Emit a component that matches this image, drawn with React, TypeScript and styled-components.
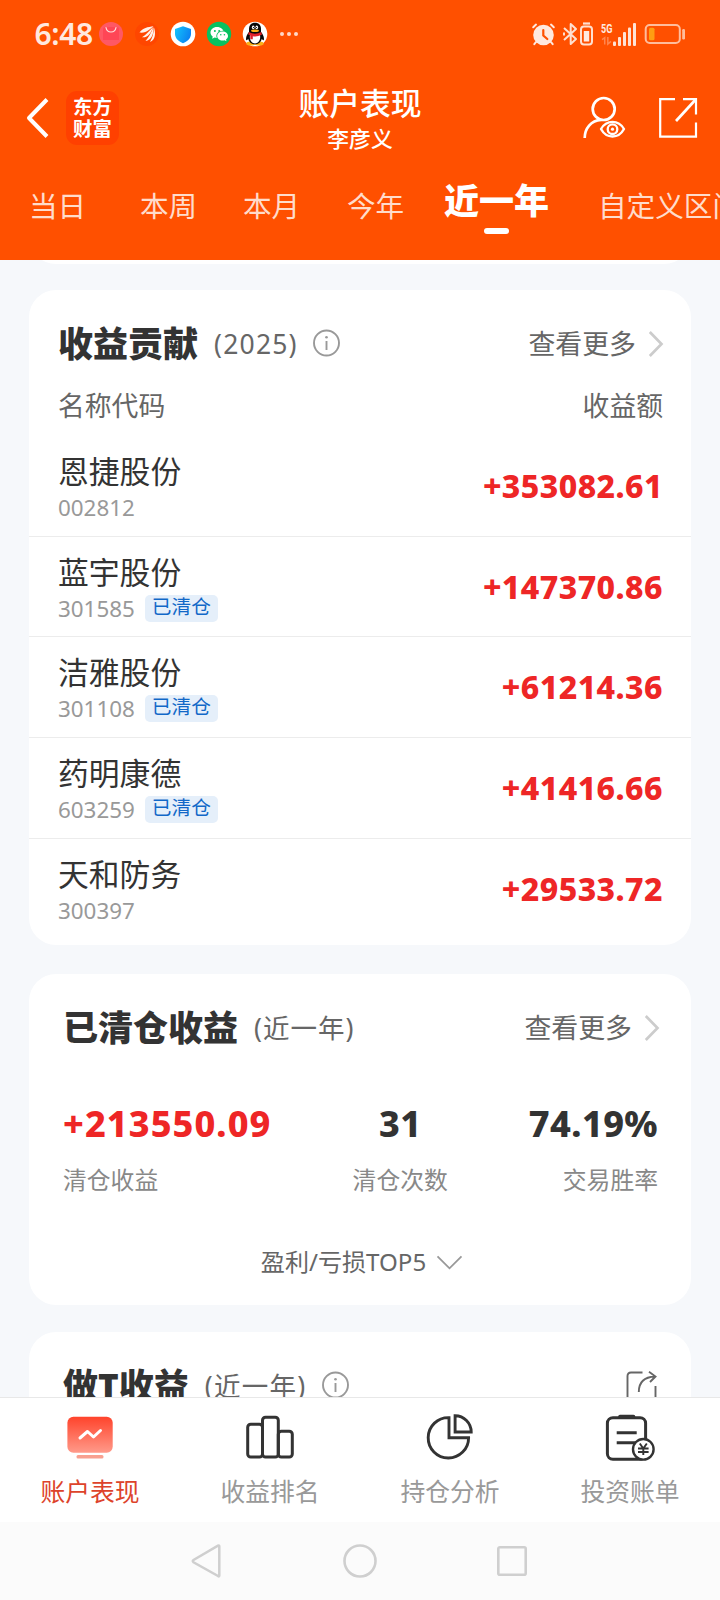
import React from "react";
import styled, { createGlobalStyle } from "styled-components";

const GlobalStyle = createGlobalStyle`
  * { box-sizing: border-box; }
  body {
    margin: 0;
    background: #f6f8fb;
    font-family: "Noto Sans", "Noto Sans CJK SC", sans-serif;
    color: #333;
  }
  svg { display: block; flex: none; overflow: visible; }
`;

const Screen = styled.div`
  width: 720px;
  height: 1600px;
  display: flex;
  flex-direction: column;
  overflow: hidden;
  background: #f6f8fb;
`;

const Header = styled.header`
  flex: none;
  height: 260px;
  background: #ff5000;
  color: #fff;
`;

const StatusBar = styled.div`
  height: 68px;
  padding: 0 34px 0 34px;
  display: flex;
  align-items: center;
  justify-content: space-between;
  color: #ffe9df;
`;

const StatusGroup = styled.div<{ $gap: number }>`
  display: flex;
  align-items: center;
  gap: ${(p) => p.$gap}px;
`;

const Clock = styled.span`
  width: 65px;
  margin-right: -12px;
  font-family: "Noto Sans", sans-serif;
  font-size: 30px;
  font-weight: 600;
  line-height: 40px;
  letter-spacing: -0.4px;
  text-indent: 0.5px;
`;

const TitleBar = styled.div`
  height: 92px;
  padding: 0 22px;
  display: grid;
  grid-template-columns: 1fr auto 1fr;
  align-items: center;
`;

const BarSide = styled.div<{ $end?: boolean }>`
  display: flex;
  align-items: center;
  justify-content: ${(p) => (p.$end ? "flex-end" : "flex-start")};
  gap: ${(p) => (p.$end ? 34 : 17)}px;
  padding: 7px ${(p) => (p.$end ? 1 : 0)}px 0 ${(p) => (p.$end ? 0 : 4)}px;
`;

const Logo = styled.div`
  width: 53px;
  height: 54px;
  border-radius: 11px;
  background: #ff4000;
  font-size: 19.4px;
  font-weight: 700;
  line-height: 22.5px;
  text-align: center;
  padding-top: 5px;
`;

const Heading = styled.div`
  text-align: center;
  padding-top: 8px;
`;

const HeadTitle = styled.h1`
  margin: 0;
  font-size: 30.8px;
  font-weight: 500;
  line-height: 40px;
`;

const HeadSub = styled.div`
  margin-top: 1px;
  font-size: 21.8px;
  font-weight: 500;
  line-height: 30px;
`;

const Tabs = styled.nav`
  height: 100px;
  padding-left: 29px;
  display: flex;
  white-space: nowrap;
  overflow: hidden;
`;

const Tab = styled.div<{ $width: number; $active?: boolean }>`
  flex: none;
  width: ${(p) => p.$width}px;
  padding-top: ${(p) => (p.$active ? 21 : 26)}px;
  font-size: ${(p) => (p.$active ? 35 : 28.6)}px;
  font-weight: ${(p) => (p.$active ? 900 : 400)};
  line-height: 40px;
  color: ${(p) => (p.$active ? "#fff" : "#ffdccb")};
`;

const Indicator = styled.div`
  width: 25px;
  height: 6px;
  margin: 7px 0 0 40px;
  border-radius: 3px;
  background: #fff;
`;

const Content = styled.main`
  flex: none;
  height: 1137px;
  padding: 0 29px;
  overflow: hidden;
`;

const Card = styled.section<{ $height: number; $gap: number }>`
  height: ${(p) => p.$height}px;
  margin-bottom: ${(p) => p.$gap}px;
  border-radius: 27px;
  background: #fff;
`;

const CardTail = styled.div`
  height: 30px;
  margin: -26px 0 26px;
  border-radius: 0 0 27px 27px;
  background: #fff;
`;

const CardHead = styled.div<{ $inset?: boolean }>`
  display: flex;
  align-items: center;
  height: 106px;
  padding: ${(p) => (p.$inset ? "0 32px 0 34px" : "0 28px 0 29px")};
`;

const CardTitle = styled.h2`
  margin: 0;
  padding-top: 2px;
  font-size: 35px;
  font-weight: 900;
  line-height: 46px;
  color: #333;
`;

const CardNote = styled.span<{ $tracking: number }>`
  margin: 0 15px 0 16px;
  padding-top: 1px;
  font-size: 26.5px;
  line-height: 40px;
  letter-spacing: ${(p) => p.$tracking}px;
  color: #666;
`;

const More = styled.span`
  margin-left: auto;
  padding-top: 2px;
  display: flex;
  align-items: center;
  gap: 13px;
  font-size: 26.9px;
  line-height: 40px;
  color: #666;
`;

const ColumnLabels = styled.div`
  height: 40px;
  margin: -10px 0 10px;
  padding: 0 28px 0 29px;
  display: flex;
  justify-content: space-between;
  font-size: 26.8px;
  line-height: 40px;
  color: #666;
`;

const Row = styled.div`
  height: 100.7px;
  padding: 0 28px 0 29px;
  display: flex;
  justify-content: space-between;
  border-bottom: 1px solid #ececec;
  &:last-child { border-bottom: 0; }
`;

const StockName = styled.div`
  padding-top: 15px;
  font-size: 30.8px;
  line-height: 40px;
  color: #333;
`;

const StockMeta = styled.div`
  display: flex;
  align-items: center;
  height: 33px;
  font-size: 22.4px;
  line-height: 33px;
  color: #999;
`;

const Badge = styled.span`
  height: 27px;
  margin-left: 10px;
  padding: 0 7px;
  border-radius: 5px;
  background: #e5effa;
  color: #1268c8;
  font-size: 19.7px;
  line-height: 24px;
`;

const Amount = styled.div`
  padding-top: 30px;
  font-size: 32px;
  font-weight: 800;
  line-height: 40px;
  letter-spacing: 0.45px;
  color: #ee2626;
`;

const Stats = styled.div`
  display: flex;
  justify-content: space-between;
  padding: 24px 33px 0 34px;
`;

const Stat = styled.div<{ $align: string }>`
  text-align: ${(p) => p.$align};
`;

const StatValue = styled.div<{ $gain?: boolean }>`
  font-size: 36px;
  font-weight: 800;
  line-height: 40px;
  letter-spacing: ${(p) => (p.$gain ? 1.1 : 0.4)}px;
  white-space: nowrap;
  color: ${(p) => (p.$gain ? "#ee2626" : "#333")};
`;

const StatLabel = styled.div`
  margin-top: 20px;
  font-size: 23.8px;
  line-height: 32px;
  color: #888;
`;

const Expand = styled.div`
  margin-top: 50px;
  padding-left: 3px;
  display: flex;
  align-items: center;
  justify-content: center;
  gap: 11px;
  font-size: 24.1px;
  line-height: 32px;
  color: #666;
`;

const BottomTabs = styled.nav`
  flex: none;
  height: 125px;
  display: grid;
  grid-template-columns: repeat(4, 1fr);
  border-top: 1px solid #e8e8e8;
  background: #fff;
`;

const BottomTab = styled.div<{ $active?: boolean }>`
  display: flex;
  flex-direction: column;
  align-items: center;
  padding-top: 14px;
  font-size: 24.8px;
  line-height: 36px;
  color: ${(p) => (p.$active ? "#dd432b" : "#999")};
  svg { margin-bottom: 13px; }
`;

const SystemBar = styled.div`
  flex: none;
  height: 78px;
  display: flex;
  justify-content: center;
  gap: 120px;
  padding-top: 22px;
  background: #fbfbfb;
`;

/* ---------- icons ---------- */

const BagIcon = () => (
  <svg width="24" height="24" viewBox="0 0 24 24" fill="none">
    <circle cx="12" cy="12" r="12" fill="#ff5864" />
    <path d="M4 7.5Q4 5 6.500 5H17.500Q20 5 20 7.500V18H4Z" fill="#ff4656" />
    <path d="M7 5.500C8 11.500 16 11.500 17 5.500" stroke="#ffe0dc" strokeWidth="1.200" strokeLinecap="round" />
  </svg>
);

const WingIcon = () => (
  <svg width="24" height="24" viewBox="0 0 24 24">
    <circle cx="12" cy="12" r="12" fill="#ff4600" />
    <g fill="#fff3ec">
      <path d="M4.500 10.500C7.500 6 13 5 18.500 4.300C15 7 11.500 11.500 4.500 10.500Z" />
      <path d="M7 15.300C11 13 14 9 18 5C16.500 10.500 13 16 7 15.300Z" />
      <path d="M10.500 19C13.500 15.500 16 11 18.300 5.500C19 11.500 16.500 18.500 10.500 19Z" />
      <path d="M15 20C17.500 15.500 19 11 18.800 5C21 11 20.500 18 15 20Z" />
    </g>
  </svg>
);

const ShieldIcon = () => (
  <svg width="24" height="24" viewBox="0 0 24 24">
    <defs>
      <linearGradient id="shield" x1="0" x2="1" y1="0.300" y2="0.700">
        <stop offset="0" stopColor="#12bffb" />
        <stop offset="1" stopColor="#0b7df0" />
      </linearGradient>
    </defs>
    <circle cx="12" cy="12" r="12.300" fill="#fff" />
    <path d="M12 4.300L20 7V12C20 16.500 16 19.500 12 21.200C8 19.500 4 16.500 4 12V7Z" fill="url(#shield)" />
  </svg>
);

const ChatIcon = () => (
  <svg width="24" height="24" viewBox="0 0 24 24">
    <circle cx="12" cy="12" r="12.200" fill="#07c160" />
    <path d="M10 5C6 5 3.500 7.600 3.500 10.500C3.500 12.200 4.400 13.600 5.700 14.600L5.200 16.700L7.600 15.500C8.400 15.800 9.200 15.900 10 15.900C14 15.900 16.700 13.400 16.700 10.500C16.700 7.600 14 5 10 5Z" fill="#fff" />
    <ellipse cx="15.400" cy="14" rx="6.100" ry="5.200" fill="#07c160" />
    <path d="M15.600 9.500C12.500 9.500 10.200 11.500 10.200 14C10.200 16.500 12.500 18.500 15.600 18.500C16.300 18.500 17 18.400 17.600 18.200L19.500 19.200L19 17.500C20.200 16.700 21 15.400 21 14C21 11.500 18.700 9.500 15.600 9.500Z" fill="#fff" />
    <g fill="#07c160">
      <circle cx="7.900" cy="8.900" r="1" /><circle cx="12.200" cy="8.900" r="1" />
      <circle cx="13.800" cy="12.700" r=".8" /><circle cx="17.400" cy="12.700" r=".8" />
    </g>
  </svg>
);

const PenguinIcon = () => (
  <svg width="24" height="24" viewBox="0 0 24 24">
    <circle cx="12" cy="12" r="12.300" fill="#fff" />
    <ellipse cx="7.800" cy="21.400" rx="4.500" ry="2" fill="#fbb118" />
    <ellipse cx="16.200" cy="21.400" rx="4.500" ry="2" fill="#fbb118" />
    <path d="M12 .8C8 .8 6 3.500 6 7V10C4 12.500 2.500 15.500 3.200 18C3.600 19 4.800 17.500 5.200 16.800C6 20.500 9 22.300 12 22.300C15 22.300 18 20.500 18.800 16.800C19.200 17.500 20.400 19 20.800 18C21.500 15.500 20 12.500 18 10V7C18 3.500 16 .8 12 .8Z" fill="#080808" />
    <path d="M7 13C6 18.500 9 21.500 12 21.500S18 18.500 17 13Z" fill="#fff" />
    <ellipse cx="10.200" cy="5.300" rx="1.300" ry="1.900" fill="#fff" />
    <ellipse cx="13.800" cy="5.300" rx="1.300" ry="1.900" fill="#fff" />
    <circle cx="10.500" cy="5.500" r=".6" /><circle cx="13.500" cy="5.500" r=".6" />
    <ellipse cx="12" cy="8.700" rx="4" ry="1.300" fill="#fbb118" />
    <path d="M5.700 10Q12 13.500 18.300 10L18.800 12.800Q14 15 9.800 14.200V17.200H7.300V13.500L5.300 12.500Z" fill="#e0202b" />
  </svg>
);

const DotsIcon = () => (
  <svg width="20" height="6" viewBox="0 0 20 6" fill="#ffd9c8">
    <circle cx="3" cy="3" r="2" /><circle cx="10" cy="3" r="2" /><circle cx="17" cy="3" r="2" />
  </svg>
);

const AlarmIcon = () => (
  <svg width="23" height="23" viewBox="0 0 23 23" fill="none" strokeLinecap="round">
    <circle cx="11.500" cy="12" r="10.300" fill="#ffe9df" />
    <path d="M1.200 4.200L4 1.600M21.800 4.200L19 1.600M4 19L2.300 21.200M19 19L20.700 21.200" stroke="#ffe9df" strokeWidth="2" />
    <path d="M11.300 7V12.500L15.300 16" stroke="#ff5000" strokeWidth="2.200" />
  </svg>
);

const BluetoothIcon = () => (
  <svg width="30" height="24" viewBox="0 0 30 24" fill="none" stroke="#ffe0d0" strokeWidth="2">
    <path d="M1 6L13 17L7.700 22V2L13 7L1 18M1 10.500V13.500" strokeLinejoin="round" />
    <rect x="18" y="4.500" width="11" height="18" rx="3" />
    <path d="M20 1.500H27" strokeWidth="2.200" />
    <rect x="20.800" y="9" width="5.400" height="10.500" fill="#ffe9df" stroke="none" />
  </svg>
);

const Network = styled.span`
  width: 12px;
  display: flex;
  flex-direction: column;
  gap: 3px;
`;

const NetworkLabel = styled.span`
  width: 17px;
  font-family: Roboto, sans-serif;
  font-size: 13px;
  font-weight: 700;
  line-height: 11px;
  color: #ffe9df;
  transform: scaleX(0.7);
  transform-origin: left center;
`;

const DataArrows = () => (
  <svg width="11" height="8" viewBox="0 0 11 9" fill="none" stroke="#ff8650" strokeWidth="1.700">
    <path d="M.5 3L3.500 .8V8.500M7 0V8L10.500 5" />
  </svg>
);

const SignalIcon = () => (
  <svg width="23" height="23" viewBox="0 0 23 23" fill="#ffe3d5">
    <rect x="0" y="18.500" width="3" height="4.500" rx="1" />
    <rect x="5" y="14" width="3" height="9" rx="1" />
    <rect x="10" y="9" width="3" height="14" rx="1" />
    <rect x="15" y="4.500" width="3" height="18.500" rx="1" />
    <rect x="20" y="0" width="3" height="23" rx="1" />
  </svg>
);

const BatteryIcon = () => (
  <svg width="42" height="22" viewBox="0 0 42 22">
    <rect x="1.700" y="2" width="34.100" height="18" rx="4" fill="none" stroke="#ffbd9c" strokeWidth="2" />
    <rect x="5" y="4.800" width="5.500" height="12.400" rx="1.500" fill="#ff9e12" />
    <rect x="38.200" y="6" width="2.800" height="10.500" rx="1.200" fill="#ffbd9c" />
  </svg>
);

const BackIcon = () => (
  <svg width="23" height="40" viewBox="0 0 23 40" fill="none" stroke="#fff" strokeWidth="4">
    <path d="M21 1.500L3 20L21 38.500" strokeLinejoin="round" />
  </svg>
);

const UserViewIcon = () => (
  <svg width="42" height="42" viewBox="0 0 42 42" fill="none" stroke="#fff" strokeWidth="2.700">
    <circle cx="20.700" cy="12" r="11" />
    <path d="M1.700 41C1.700 31.500 8 23.300 18 22.800" />
    <path d="M18 32C23.500 22.500 35.500 22.500 41 32C35.500 42 23.500 42 18 32Z" strokeWidth="2.400" strokeLinejoin="round" />
    <circle cx="29.500" cy="32.200" r="4.800" strokeWidth="2.300" />
    <circle cx="29.500" cy="32.200" r="1.600" fill="#fff" stroke="none" />
  </svg>
);

const OpenIcon = () => (
  <svg width="38" height="40" viewBox="0 0 38 40" fill="none" stroke="#fff" strokeWidth="2.200">
    <path d="M16 1.200H1.200V38.700H37V24.500M24 1.200H37V16.500" />
    <path d="M36.700 1.500L17 23" strokeWidth="2.700" />
  </svg>
);

const InfoIcon = () => (
  <svg width="27" height="27" viewBox="0 0 27 27" fill="none" stroke="#999" strokeWidth="1.900">
    <circle cx="13.500" cy="13" r="12.500" />
    <path d="M13.500 11V20" />
    <circle cx="13.500" cy="7.300" r="1.300" fill="#999" stroke="none" />
  </svg>
);

const ChevronRight = () => (
  <svg width="14" height="26" viewBox="0 0 14 26" fill="none" stroke="#ccc" strokeWidth="2.700">
    <path d="M.8 1L12.500 13L.8 25" />
  </svg>
);

const ChevronDown = () => (
  <svg width="25" height="14" viewBox="0 0 25 14" fill="none" stroke="#999" strokeWidth="1.800">
    <path d="M.5 1.300L12.500 13.300L24.500 1.300" />
  </svg>
);

const ShareIcon = () => (
  <svg width="33" height="31" viewBox="0 0 33 31" fill="none" stroke="#666" strokeWidth="1.900">
    <path d="M16.500 1.500H5Q1.500 1.500 1.500 5V29.500H29.500V15" />
    <path d="M12.800 21C12.800 12 17.500 6 29 5.500M23 .8L29.500 5.500L24 11" />
  </svg>
);

const PerformanceIcon = () => (
  <svg width="48" height="48" viewBox="0 0 48 48">
    <defs>
      <linearGradient id="panel" x1="0" x2="0" y1="0" y2="1">
        <stop offset="0" stopColor="#ff432b" />
        <stop offset="1" stopColor="#ff9a8a" />
      </linearGradient>
    </defs>
    <rect x="1.400" y="4.700" width="45.300" height="36" rx="6" fill="url(#panel)" />
    <rect x="10.500" y="43" width="27" height="3.600" rx="1.500" fill="#f8a090" />
    <path d="M14 26L21.500 19.500L27.500 25L34.500 18.500" fill="none" stroke="#fff" strokeWidth="3" strokeLinecap="round" strokeLinejoin="round" />
  </svg>
);

const RankingIcon = () => (
  <svg width="48" height="48" viewBox="0 0 48 48" fill="none" stroke="#333" strokeWidth="3">
    <rect x="1.700" y="12.300" width="14.800" height="32.700" rx="3" />
    <rect x="16.500" y="5.300" width="15.800" height="39.700" rx="3" />
    <rect x="32.300" y="19.300" width="14" height="25.700" rx="3" />
  </svg>
);

const PieIcon = () => (
  <svg width="48" height="48" viewBox="0 0 48 48" fill="none" stroke="#333" strokeWidth="2.900">
    <path d="M23 5.600A20.200 20.200 0 1 0 42.600 25.700H23Z" />
    <path d="M29.100 3.700V20H45.200C45.200 11 38 3.700 29.100 3.700Z" />
  </svg>
);

const BillIcon = () => (
  <svg width="48" height="48" viewBox="0 0 48 48" fill="none" stroke="#333" strokeWidth="3">
    <rect x="1.400" y="5.700" width="38.200" height="41.500" rx="5.500" />
    <path d="M14 4.500H27.500" strokeWidth="3.600" strokeLinecap="round" />
    <path d="M10.700 20.700H30.700M10.700 30.700H30" />
    <circle cx="37.300" cy="37.300" r="10.300" fill="#fff" strokeWidth="2.400" />
    <path d="M33.800 31.500L37.300 36.500L40.800 31.500M37.300 36.500V43M32 36.500H42.600M32 40H42.600" strokeWidth="1.900" />
  </svg>
);

/* ---------- data ---------- */

const periods = [
  { label: "当日", width: 111 },
  { label: "本周", width: 103 },
  { label: "本月", width: 104 },
  { label: "今年", width: 97 },
  { label: "近一年", width: 154, active: true },
  { label: "自定义区间", width: 150 },
];

const stocks = [
  { name: "恩捷股份", code: "002812", amount: "+353082.61" },
  { name: "蓝宇股份", code: "301585", amount: "+147370.86", cleared: true },
  { name: "洁雅股份", code: "301108", amount: "+61214.36", cleared: true },
  { name: "药明康德", code: "603259", amount: "+41416.66", cleared: true },
  { name: "天和防务", code: "300397", amount: "+29533.72" },
];

const sections = [
  { label: "账户表现", Icon: PerformanceIcon, active: true },
  { label: "收益排名", Icon: RankingIcon },
  { label: "持仓分析", Icon: PieIcon },
  { label: "投资账单", Icon: BillIcon },
];

export default function App() {
  return (
    <Screen>
      <GlobalStyle />
      <Header>
        <StatusBar>
          <StatusGroup $gap={12}>
            <Clock>6:48</Clock>
            <BagIcon />
            <WingIcon />
            <ShieldIcon />
            <ChatIcon />
            <PenguinIcon />
            <DotsIcon />
          </StatusGroup>
          <StatusGroup $gap={8}>
            <AlarmIcon />
            <BluetoothIcon />
            <StatusGroup $gap={0}>
              <Network>
                <NetworkLabel>5G</NetworkLabel>
                <DataArrows />
              </Network>
              <SignalIcon />
            </StatusGroup>
            <BatteryIcon />
          </StatusGroup>
        </StatusBar>
        <TitleBar>
          <BarSide>
            <BackIcon />
            <Logo>东方<br />财富</Logo>
          </BarSide>
          <Heading>
            <HeadTitle>账户表现</HeadTitle>
            <HeadSub>李彦义</HeadSub>
          </Heading>
          <BarSide $end>
            <UserViewIcon />
            <OpenIcon />
          </BarSide>
        </TitleBar>
        <Tabs>
          {periods.map((p) => (
            <Tab key={p.label} $width={p.width} $active={p.active}>
              {p.label}
              {p.active && <Indicator />}
            </Tab>
          ))}
        </Tabs>
      </Header>

      <Content>
        <CardTail />
        <Card $height={655} $gap={29}>
          <CardHead>
            <CardTitle>收益贡献</CardTitle>
            <CardNote $tracking={1.2}>(2025)</CardNote>
            <InfoIcon />
            <More>查看更多<ChevronRight /></More>
          </CardHead>
          <ColumnLabels>
            <span>名称代码</span>
            <span>收益额</span>
          </ColumnLabels>
          {stocks.map((s) => (
            <Row key={s.code}>
              <div>
                <StockName>{s.name}</StockName>
                <StockMeta>
                  {s.code}
                  {s.cleared && <Badge>已清仓</Badge>}
                </StockMeta>
              </div>
              <Amount>{s.amount}</Amount>
            </Row>
          ))}
        </Card>

        <Card $height={331} $gap={27}>
          <CardHead $inset>
            <CardTitle>已清仓收益</CardTitle>
            <CardNote $tracking={1}>(近一年)</CardNote>
            <More>查看更多<ChevronRight /></More>
          </CardHead>
          <Stats>
            <Stat $align="left">
              <StatValue $gain>+213550.09</StatValue>
              <StatLabel>清仓收益</StatLabel>
            </Stat>
            <Stat $align="center">
              <StatValue>31</StatValue>
              <StatLabel>清仓次数</StatLabel>
            </Stat>
            <Stat $align="right">
              <StatValue>74.19%</StatValue>
              <StatLabel>交易胜率</StatLabel>
            </Stat>
          </Stats>
          <Expand>盈利/亏损TOP5<ChevronDown /></Expand>
        </Card>

        <Card $height={200} $gap={0}>
          <CardHead $inset>
            <CardTitle>做T收益</CardTitle>
            <CardNote $tracking={1.3}>(近一年)</CardNote>
            <InfoIcon />
            <More><ShareIcon /></More>
          </CardHead>
        </Card>
      </Content>

      <BottomTabs>
        {sections.map(({ label, Icon, active }) => (
          <BottomTab key={label} $active={active}>
            <Icon />
            {label}
          </BottomTab>
        ))}
      </BottomTabs>

      <SystemBar>
        <svg width="32" height="34" viewBox="0 0 32 34" fill="none" stroke="#cfcfcf" strokeWidth="2.500">
          <path d="M28.300 2.500V31.500Q28.300 33 27 32L2.500 18.300Q1 17 2.500 16L27 1.700Q28.300 1 28.300 2.500Z" />
        </svg>
        <svg width="34" height="34" viewBox="0 0 34 34" fill="none" stroke="#cfcfcf" strokeWidth="2.600">
          <circle cx="17" cy="17" r="15.500" />
        </svg>
        <svg width="32" height="34" viewBox="0 0 32 34" fill="none" stroke="#cfcfcf" strokeWidth="2.600">
          <rect x="1.300" y="3.300" width="27.400" height="27.400" rx="1.500" />
        </svg>
      </SystemBar>
    </Screen>
  );
}
